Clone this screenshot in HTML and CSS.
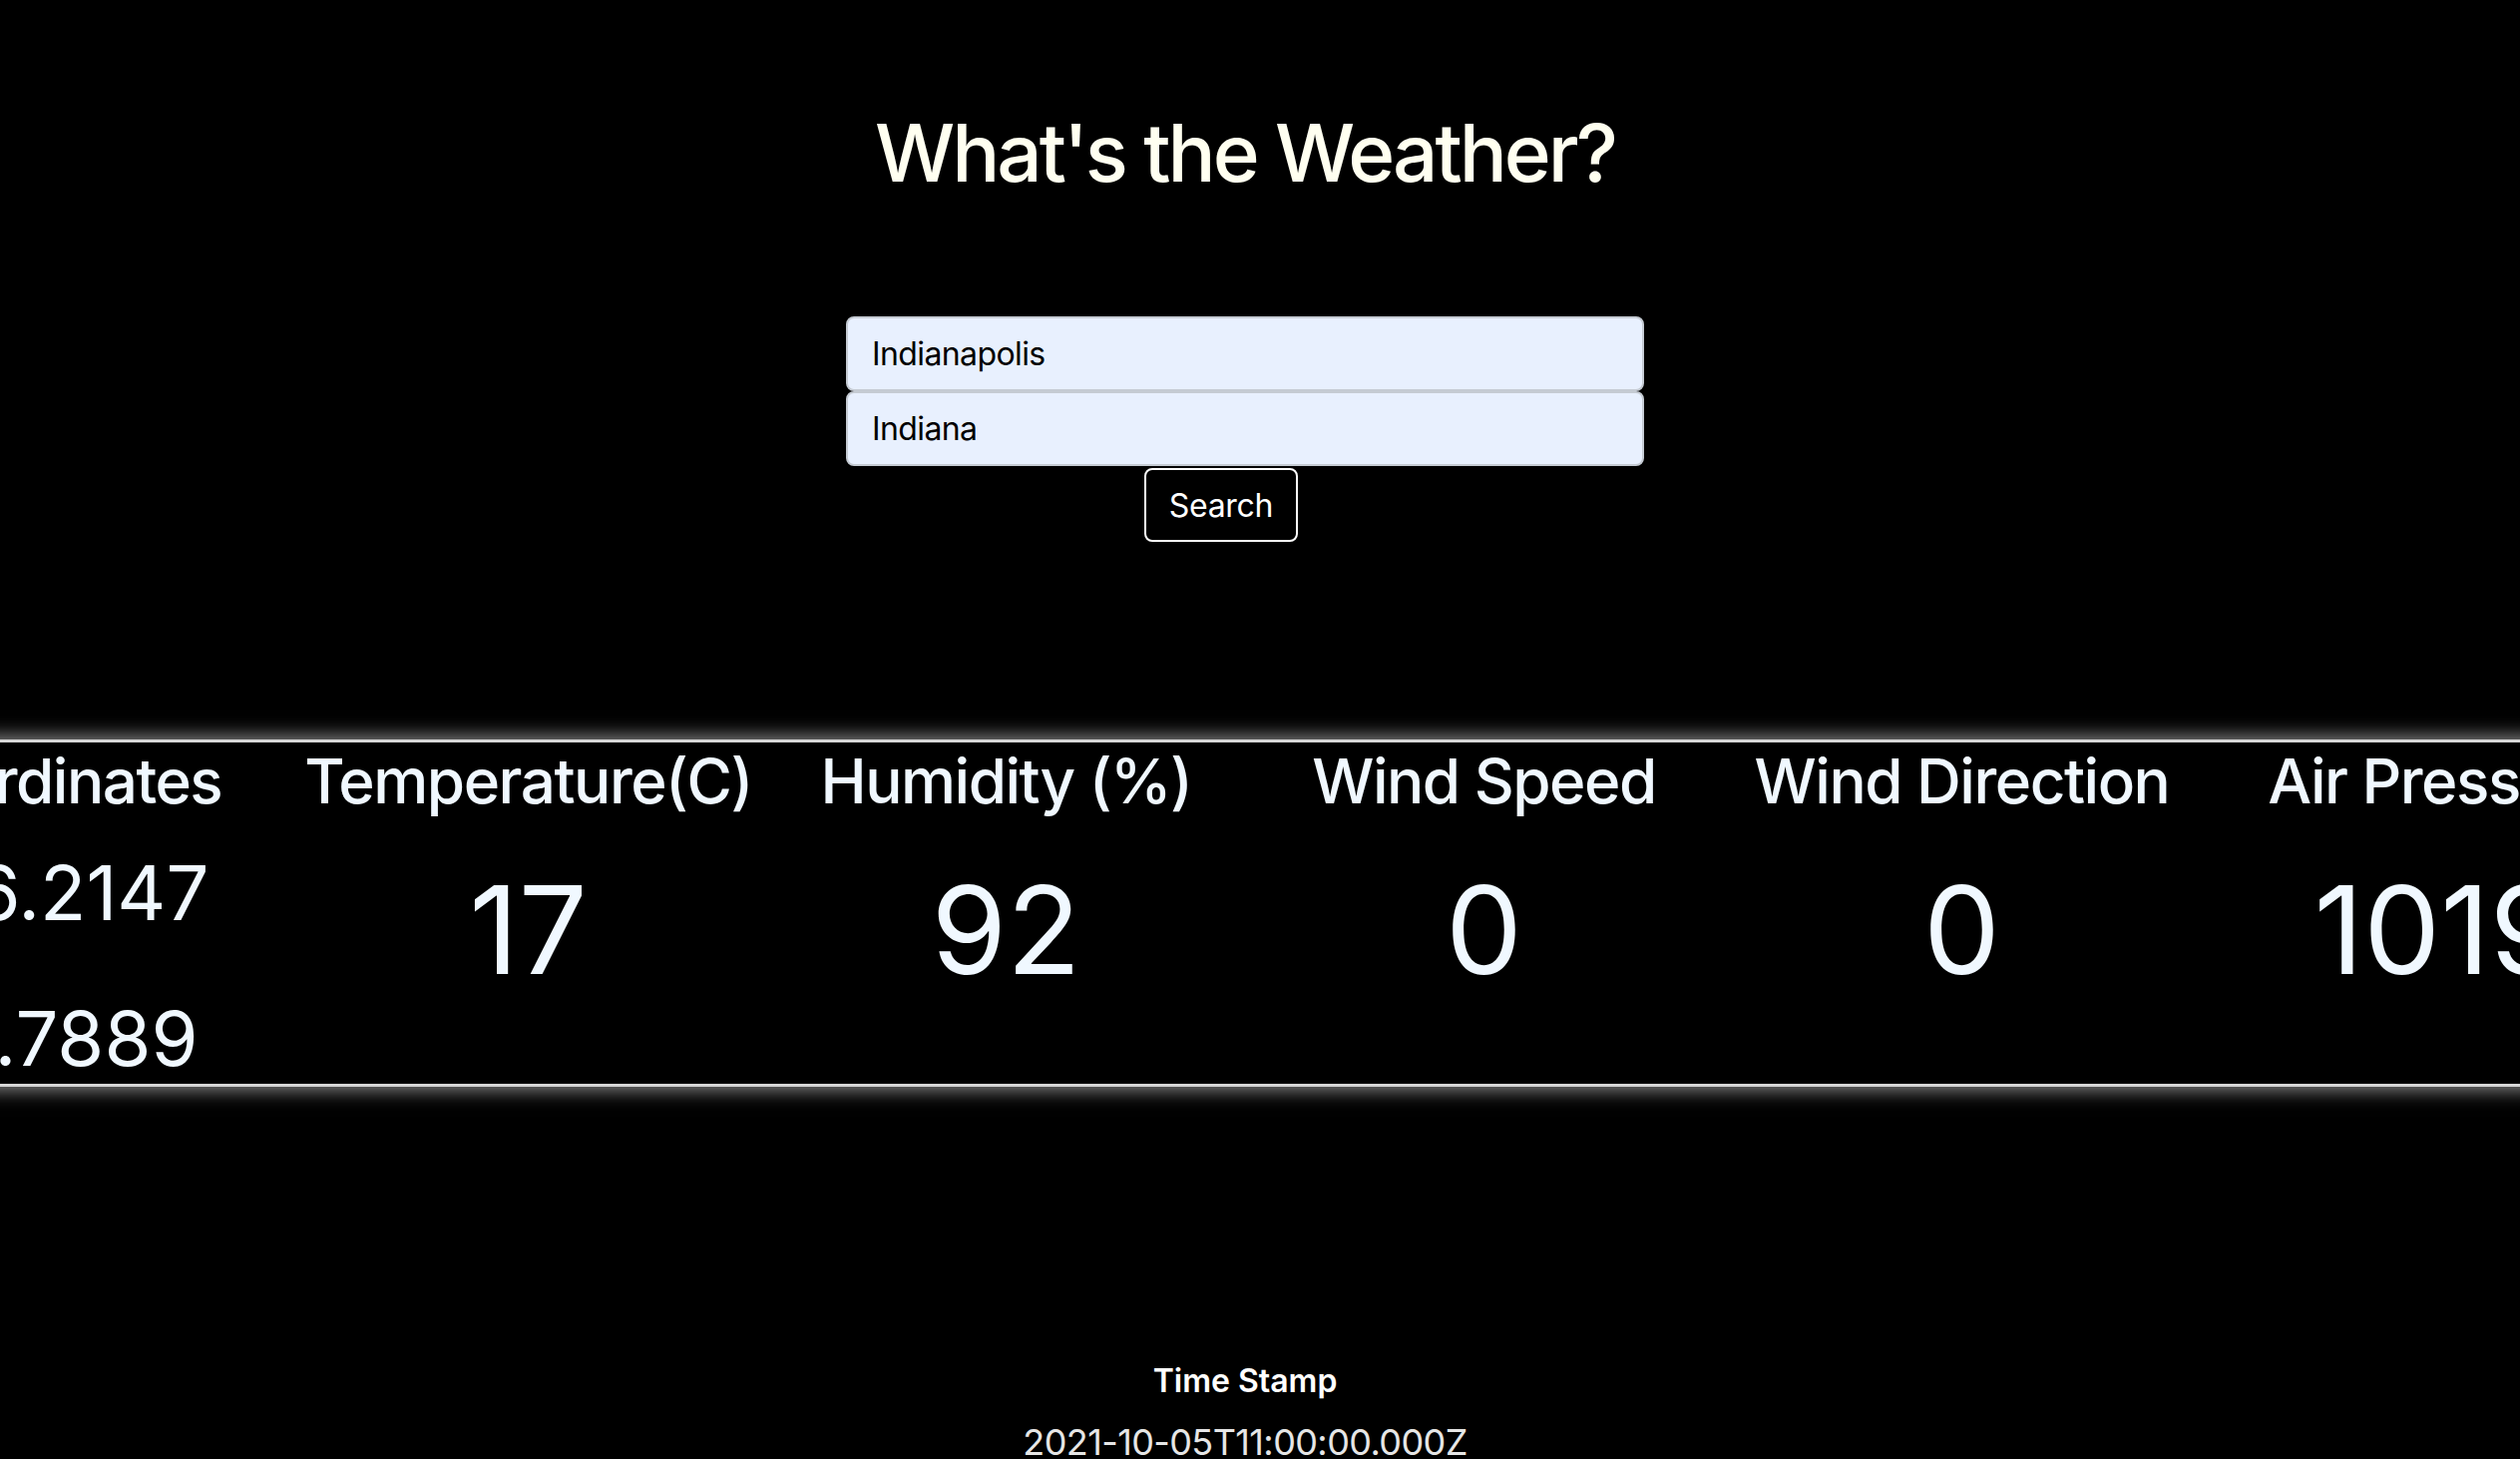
FILE: index.html
```html
<!DOCTYPE html>
<html lang="en">
<head>
<meta charset="utf-8">
<title>What's the Weather?</title>
<link rel="stylesheet" href="styles.css">
</head>
<body>
<main class="app">
  <h1 class="title">What's the Weather?</h1>
  <form class="search">
    <input class="field" type="text" value="Indianapolis">
    <input class="field" type="text" value="Indiana">
    <button class="btn" type="button">Search</button>
  </form>
  <section class="results">
    <div class="weather">
      <div class="head">Coordinates</div>
      <div class="head">Temperature(C)</div>
      <div class="head">Humidity (%)</div>
      <div class="head">Wind Speed</div>
      <div class="head">Wind Direction</div>
      <div class="head">Air Pressure</div>
      <div class="cell coords">
        <p class="coord">-86.2147</p>
        <p class="coord">39.7889</p>
      </div>
      <div class="cell big">17</div>
      <div class="cell big">92</div>
      <div class="cell big">0</div>
      <div class="cell big">0</div>
      <div class="cell big">1019</div>
    </div>
  </section>
  <section class="stamp">
    <h3 class="stamp-label">Time Stamp</h3>
    <p class="stamp-value">2021-10-05T11:00:00.000Z</p>
  </section>
</main>
</body>
</html>
```
FILE: styles.css
```css
html, body {
  margin: 0;
  padding: 0;
  background: #000;
  overflow: hidden;
}
body {
  font-family: Inter, "Noto Sans", "Liberation Sans", sans-serif;
  color: #f0f8ff;
}
.app {
  width: 2496px;
  display: flex;
  flex-direction: column;
  align-items: center;
}
.title {
  margin: 104px 0 0;
  font-size: 80px;
  font-weight: 550;
  letter-spacing: -3px;
  color: #fffff0;
  line-height: 97px;
}
.search {
  margin-top: 116px;
  display: flex;
  flex-direction: column;
  align-items: center;
}
.field {
  box-sizing: border-box;
  width: 800px;
  height: 75px;
  padding: 0 24px;
  border: 2px solid #c5cbd3;
  border-radius: 8px;
  background: #e8f0fe;
  font-family: Inter, "Noto Sans", sans-serif;
  font-size: 32px;
  letter-spacing: -0.6px;
  color: #000;
}
.btn {
  box-sizing: border-box;
  margin-top: 2px;
  margin-right: 48px;
  height: 74px;
  padding: 0 23px;
  border: 2px solid #fff;
  border-radius: 8px;
  background: #000;
  color: #fff;
  font-family: Inter, "Noto Sans", sans-serif;
  font-size: 32px;
  letter-spacing: -0.3px;
}
.results {
  align-self: stretch;
  margin-top: 198px;
  display: flex;
  justify-content: center;
}
.weather {
  flex: none;
  display: grid;
  grid-template-columns: repeat(6, 479px);
  grid-template-rows: 76px 266px;
  border-top: 3px solid #d6d6d6;
  border-bottom: 3px solid #d6d6d6;
  box-shadow: 0 0 18px 3px rgba(255, 255, 255, 0.55);
  background: #000;
}
.head {
  text-align: center;
  font-size: 62px;
  font-weight: 550;
  letter-spacing: -1.5px;
  line-height: 75px;
  white-space: nowrap;
  padding-top: 1px;
}
.cell {
  text-align: center;
}
.big {
  padding-top: 38px;
  font-size: 122px;
  font-weight: 400;
  line-height: 148px;
}
.coords {
  padding-top: 28px;
  display: flex;
  flex-direction: column;
  gap: 54px;
}
.coord {
  margin: 0;
  font-size: 76px;
  line-height: 92px;
}
.stamp {
  margin-top: 275px;
  display: flex;
  flex-direction: column;
  align-items: center;
}
.stamp-label {
  margin: 0;
  font-size: 32px;
  font-weight: 600;
  line-height: 39px;
  color: #fff;
}
.stamp-value {
  margin: 20px 0 0;
  font-size: 36px;
  letter-spacing: -0.6px;
  line-height: 44px;
  color: #e6e6e6;
}
```
